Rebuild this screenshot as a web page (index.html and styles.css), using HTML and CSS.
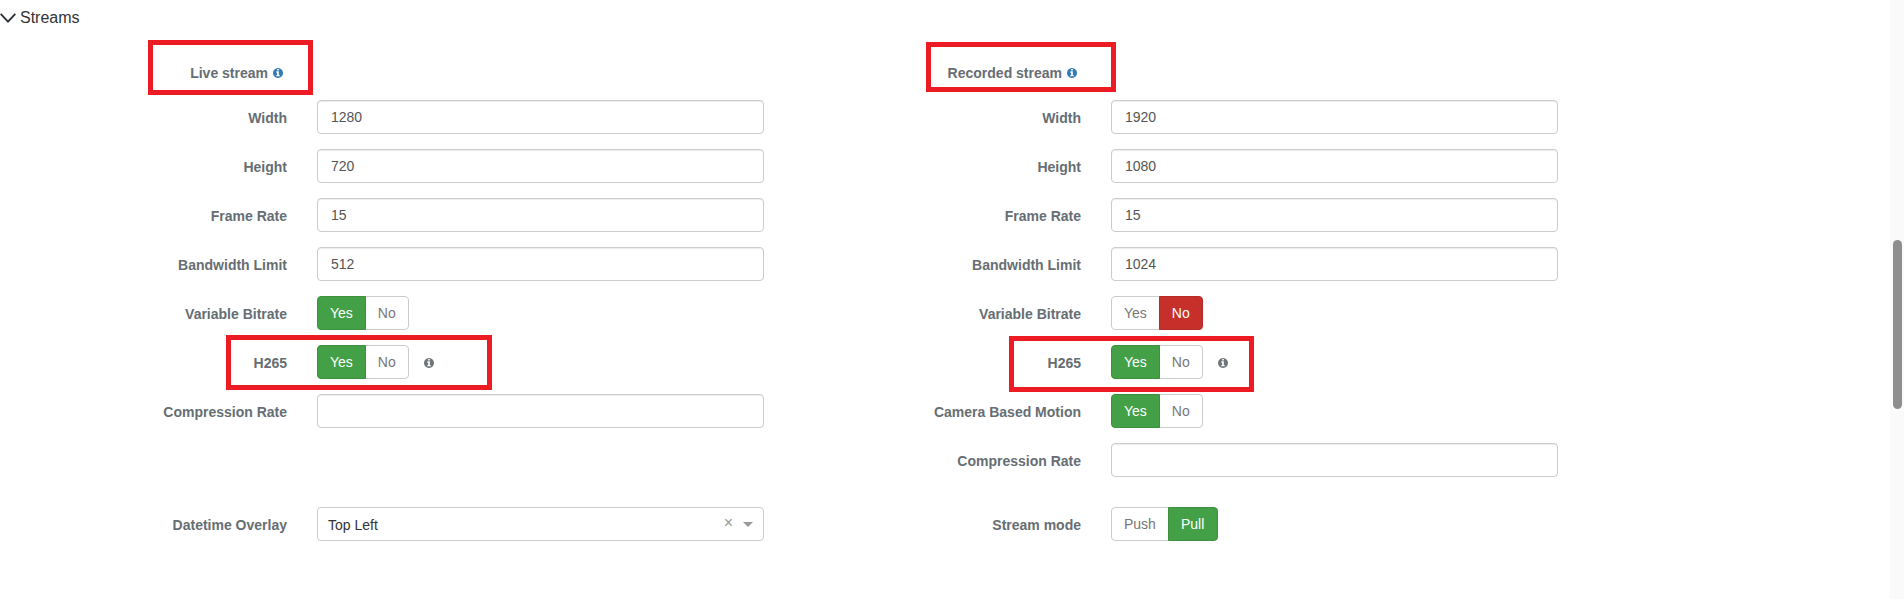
FILE: index.html
```html
<!DOCTYPE html>
<html lang="en">
<head>
<meta charset="utf-8">
<title>Streams</title>
<link rel="stylesheet" href="styles.css">
</head>
<body>
<svg class="defs" aria-hidden="true"><symbol id="info" viewBox="128 128 1536 1536"><path d="M1152 1376v-160q0-14-9-23t-23-9h-96v-512q0-14-9-23t-23-9h-320q-14 0-23 9t-9 23v160q0 14 9 23t23 9h96v320h-96q-14 0-23 9t-9 23v160q0 14 9 23t23 9h448q14 0 23-9t9-23zm-128-896v-160q0-14-9-23t-23-9h-192q-14 0-23 9t-9 23v160q0 14 9 23t23 9h192q14 0 23-9t9-23zm640 416q0 209-103 385.5t-279.5 279.5-385.5 103-385.5-103-279.5-279.5-103-385.5 103-385.5 279.5-279.5 385.5-103 385.5 103 279.5 279.5 103 385.5z"/></symbol></svg>
<div class="page">
  <main class="content">
    <header class="section-head">
      <svg class="chevron" viewBox="0 0 16 10"><path d="M0.7 0.8 8 8.6 15.3 0.8"/></svg>
      <span>Streams</span>
    </header>
    <form class="columns">
      <section class="column">
        <div class="row title-row"><div class="label">Live stream <svg class="icon icon-blue"><use href="#info"/></svg></div></div>
        <div class="row"><label class="label">Width</label><input class="field" value="1280"></div>
        <div class="row"><label class="label">Height</label><input class="field" value="720"></div>
        <div class="row"><label class="label">Frame Rate</label><input class="field" value="15"></div>
        <div class="row"><label class="label">Bandwidth Limit</label><input class="field" value="512"></div>
        <div class="row"><label class="label">Variable Bitrate</label><div class="toggle"><button type="button" class="btn on">Yes</button><button type="button" class="btn">No</button></div></div>
        <div class="row"><label class="label">H265</label><div class="toggle"><button type="button" class="btn on">Yes</button><button type="button" class="btn">No</button></div><svg class="icon icon-grey"><use href="#info"/></svg></div>
        <div class="row"><label class="label">Compression Rate</label><input class="field"></div>
        <div class="row row-far"><label class="label">Datetime Overlay</label>
          <div class="field select"><span class="select-value">Top Left</span><span class="select-clear">×</span><span class="select-arrow"></span></div>
        </div>
      </section>
      <section class="column">
        <div class="row title-row"><div class="label">Recorded stream <svg class="icon icon-blue"><use href="#info"/></svg></div></div>
        <div class="row"><label class="label">Width</label><input class="field" value="1920"></div>
        <div class="row"><label class="label">Height</label><input class="field" value="1080"></div>
        <div class="row"><label class="label">Frame Rate</label><input class="field" value="15"></div>
        <div class="row"><label class="label">Bandwidth Limit</label><input class="field" value="1024"></div>
        <div class="row"><label class="label">Variable Bitrate</label><div class="toggle"><button type="button" class="btn">Yes</button><button type="button" class="btn off">No</button></div></div>
        <div class="row"><label class="label">H265</label><div class="toggle"><button type="button" class="btn on">Yes</button><button type="button" class="btn">No</button></div><svg class="icon icon-grey"><use href="#info"/></svg></div>
        <div class="row"><label class="label">Camera Based Motion</label><div class="toggle"><button type="button" class="btn on">Yes</button><button type="button" class="btn">No</button></div></div>
        <div class="row"><label class="label">Compression Rate</label><input class="field"></div>
        <div class="row row-near"><label class="label">Stream mode</label><div class="toggle toggle-mode"><button type="button" class="btn">Push</button><button type="button" class="btn on">Pull</button></div></div>
      </section>
    </form>
    <div class="mark mark-live"></div>
    <div class="mark mark-recorded"></div>
    <div class="mark mark-h265-live"></div>
    <div class="mark mark-h265-recorded"></div>
  </main>
  <aside class="scrollbar"><div class="thumb"></div></aside>
</div>
</body>
</html>
```
FILE: styles.css
```css
* { box-sizing: border-box; }
html, body { margin: 0; height: 100%; overflow: hidden; }
body { background: #fff; font-family: "Liberation Sans", Arial, sans-serif; font-size: 14px; line-height: 20px; color: #333; }
.defs { display: none; }
.page { display: flex; height: 599px; }
.content { position: relative; flex: 1; min-width: 0; }
.section-head { display: flex; align-items: center; gap: 4px; height: 35px; margin-bottom: 28px; font-size: 16px; color: #333; }
.chevron { width: 16px; height: 10px; margin-top: 1px; fill: none; stroke: #2b3238; stroke-width: 1.9; }
.columns { display: flex; gap: 150px; padding-left: 120px; }
.column { display: flex; flex-direction: column; gap: 15px; width: 644px; }
.row { display: flex; align-items: flex-start; }
.title-row { height: 20px; margin-bottom: 2px; }
.title-row .label { padding-top: 0; padding-right: 4px; margin-right: 0; display: flex; justify-content: flex-end; align-items: center; gap: 5px; }
.row-far { margin-top: 64px; }
.row-near { margin-top: 15px; }
.label { width: 167px; margin-right: 30px; padding-top: 8px; text-align: right; font-weight: 700; color: #666e73; white-space: nowrap; }
.field { display: block; width: 447px; height: 34px; padding: 0 13px; border: 1px solid #ccc; border-radius: 4px; background: #fff; box-shadow: inset 0 1px 1px rgba(0,0,0,.075); font: inherit; color: #555; outline: none; }
.select { display: flex; align-items: center; padding: 2px 10px 0 10px; box-shadow: none; color: #333; }
.select-value { flex: 1; }
.select-clear { margin: -5px 10px 0 0; font-size: 16px; color: #999; }
.select-arrow { width: 0; height: 0; margin-top: -2px; border: 5px solid transparent; border-top-color: #999; border-bottom-width: 0; }
.toggle { display: flex; }
.btn { height: 34px; margin: 0 0 0 -1px; padding: 0 12px; border: 1px solid #ccc; background: #fff; font: inherit; color: #777; }
.btn:first-child { margin-left: 0; border-radius: 4px 0 0 4px; }
.btn:last-child { border-radius: 0 4px 4px 0; }
.toggle-mode .btn:last-child { padding-right: 13px; }
.btn.on { border-color: #3e8f3e; background: #43a047; color: #fff; position: relative; }
.btn.off { border-color: #b52b27; background: #c62f2a; color: #fff; position: relative; }
.icon { display: inline-block; width: 10px; height: 10px; }
.icon-blue { fill: #337ab7; }
.icon-grey { fill: #6f7679; margin: 13px 0 0 15px; }
.mark { position: absolute; border: 5px solid #ed1c24; pointer-events: none; }
.mark-live { left: 148px; top: 40px; width: 165px; height: 55px; }
.mark-recorded { left: 926px; top: 42px; width: 190px; height: 50px; }
.mark-h265-live { left: 226px; top: 335px; width: 266px; height: 55px; }
.mark-h265-recorded { left: 1009px; top: 336px; width: 245px; height: 56px; }
.scrollbar { flex: none; width: 14px; padding: 240px 2px 0 3px; background: #fafafa; }
.thumb { height: 169px; border-radius: 5px; background: #8e8e8e; }
```
